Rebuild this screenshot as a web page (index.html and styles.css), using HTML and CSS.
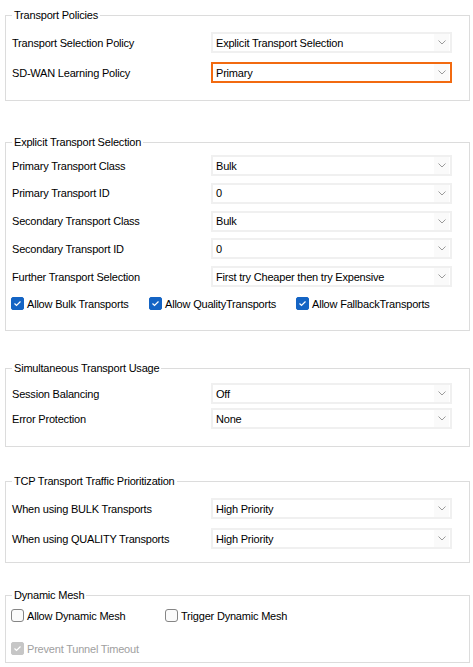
FILE: index.html
```html
<!DOCTYPE html>
<html>
<head>
<meta charset="utf-8">
<link rel="stylesheet" href="styles.css">
</head>
<body>
<fieldset class="group g1">
  <legend>Transport Policies</legend>
  <div class="rows r1">
    <span class="lbl">Transport Selection Policy</span>
    <div class="combo"><span>Explicit Transport Selection</span><i class="arrow"><svg width="8" height="5" viewBox="0 0 8 5"><polyline points="0.5,0.5 4,4 7.5,0.5"/></svg></i></div>
    <span class="lbl">SD-WAN Learning Policy</span>
    <div class="combo focus"><span>Primary</span><i class="arrow"><svg width="8" height="5" viewBox="0 0 8 5"><polyline points="0.5,0.5 4,4 7.5,0.5"/></svg></i></div>
  </div>
</fieldset>

<fieldset class="group g2">
  <legend>Explicit Transport Selection</legend>
  <div class="rows r2">
    <span class="lbl">Primary Transport Class</span>
    <div class="combo"><span>Bulk</span><i class="arrow"><svg width="8" height="5" viewBox="0 0 8 5"><polyline points="0.5,0.5 4,4 7.5,0.5"/></svg></i></div>
    <span class="lbl">Primary Transport ID</span>
    <div class="combo"><span>0</span><i class="arrow"><svg width="8" height="5" viewBox="0 0 8 5"><polyline points="0.5,0.5 4,4 7.5,0.5"/></svg></i></div>
    <span class="lbl">Secondary Transport Class</span>
    <div class="combo"><span>Bulk</span><i class="arrow"><svg width="8" height="5" viewBox="0 0 8 5"><polyline points="0.5,0.5 4,4 7.5,0.5"/></svg></i></div>
    <span class="lbl">Secondary Transport ID</span>
    <div class="combo"><span>0</span><i class="arrow"><svg width="8" height="5" viewBox="0 0 8 5"><polyline points="0.5,0.5 4,4 7.5,0.5"/></svg></i></div>
    <span class="lbl">Further Transport Selection</span>
    <div class="combo"><span>First try Cheaper then try Expensive</span><i class="arrow"><svg width="8" height="5" viewBox="0 0 8 5"><polyline points="0.5,0.5 4,4 7.5,0.5"/></svg></i></div>
  </div>
  <div class="checks c2">
    <label class="chk"><i class="box on"><svg width="13" height="13" viewBox="0 0 13 13"><polyline points="3.5,6.5 5.5,8.5 9.5,4.5"/></svg></i>Allow Bulk Transports</label>
    <label class="chk"><i class="box on"><svg width="13" height="13" viewBox="0 0 13 13"><polyline points="3.5,6.5 5.5,8.5 9.5,4.5"/></svg></i>Allow QualityTransports</label>
    <label class="chk"><i class="box on"><svg width="13" height="13" viewBox="0 0 13 13"><polyline points="3.5,6.5 5.5,8.5 9.5,4.5"/></svg></i>Allow FallbackTransports</label>
  </div>
</fieldset>

<fieldset class="group g3">
  <legend>Simultaneous Transport Usage</legend>
  <div class="rows r3">
    <span class="lbl">Session Balancing</span>
    <div class="combo"><span>Off</span><i class="arrow"><svg width="8" height="5" viewBox="0 0 8 5"><polyline points="0.5,0.5 4,4 7.5,0.5"/></svg></i></div>
    <span class="lbl">Error Protection</span>
    <div class="combo"><span>None</span><i class="arrow"><svg width="8" height="5" viewBox="0 0 8 5"><polyline points="0.5,0.5 4,4 7.5,0.5"/></svg></i></div>
  </div>
</fieldset>

<fieldset class="group g4">
  <legend>TCP Transport Traffic Prioritization</legend>
  <div class="rows r4">
    <span class="lbl">When using BULK Transports</span>
    <div class="combo"><span>High Priority</span><i class="arrow"><svg width="8" height="5" viewBox="0 0 8 5"><polyline points="0.5,0.5 4,4 7.5,0.5"/></svg></i></div>
    <span class="lbl">When using QUALITY Transports</span>
    <div class="combo"><span>High Priority</span><i class="arrow"><svg width="8" height="5" viewBox="0 0 8 5"><polyline points="0.5,0.5 4,4 7.5,0.5"/></svg></i></div>
  </div>
</fieldset>

<fieldset class="group g5">
  <legend>Dynamic Mesh</legend>
  <div class="checks c5">
    <label class="chk"><i class="box"></i>Allow Dynamic Mesh</label>
    <label class="chk"><i class="box"></i>Trigger Dynamic Mesh</label>
  </div>
  <div class="checks c5b">
    <label class="chk disabled"><i class="box dis"><svg width="13" height="13" viewBox="0 0 13 13"><polyline points="3.5,6.5 5.5,8.5 9.5,4.5"/></svg></i>Prevent Tunnel Timeout</label>
  </div>
</fieldset>
</body>
</html>
```

FILE: styles.css
```css
html, body {
  margin: 0;
  padding: 0;
  background: #ffffff;
}

body {
  font-family: "Liberation Sans", Arial, sans-serif;
  font-size: 11px;
  letter-spacing: -0.2px;
  color: #000;
  width: 473px;
  height: 667px;
  overflow: hidden;
}

.group {
  box-sizing: border-box;
  width: 465px;
  margin: 0 0 0 5px;
  border: 1px solid #dcdcdc;
  padding: 0 17px 0 6px;
  min-width: 0;
}

.group legend {
  padding: 0 2px;
  line-height: 15px;
  height: 15px;
}

.g1 { margin-top: 8px; padding-top: 9px; padding-bottom: 17px; }
.g2 { margin-top: 34px; padding-top: 5px; padding-bottom: 19px; }
.g3 { margin-top: 30px; padding-top: 7px; padding-bottom: 17px; }
.g4 { margin-top: 27px; padding-top: 9px; padding-bottom: 13px; }
.g5 { margin-top: 25px; padding-top: 5px; padding-bottom: 6px; }

.rows {
  display: grid;
  grid-template-columns: 199px 241px;
  grid-auto-rows: 21px;
  align-items: center;
}

.r1 { row-gap: 9px; }
.r2 { row-gap: 6.75px; }
.r3 { row-gap: 4px; }
.r4 { row-gap: 9px; }

.lbl {
  white-space: nowrap;
}

.combo {
  box-sizing: border-box;
  height: 21px;
  border: 2px solid #f0f0f0;
  background: #fff;
  display: flex;
  align-items: center;
  padding-left: 3px;
}

.combo.focus {
  border-color: #f26a10;
}

.combo span {
  flex: 1;
  white-space: nowrap;
}

.arrow {
  width: 15px;
  align-self: stretch;
  background: #fafafa;
  display: flex;
  align-items: center;
  justify-content: center;
  margin-right: 1px;
}

.arrow svg {
  display: block;
}

.arrow polyline {
  fill: none;
  stroke: #9a9a9a;
  stroke-width: 1;
}

.checks {
  display: grid;
  height: 15px;
  align-items: center;
  margin-left: -1px;
}

.c2 {
  margin-top: 9px;
  grid-template-columns: 138px 147px auto;
}

.c5 {
  grid-template-columns: 154px auto;
}

.c5b {
  margin-top: 18px;
}

.chk {
  display: flex;
  align-items: center;
  gap: 3px;
  white-space: nowrap;
}

.chk.disabled {
  color: #a0a0a0;
}

.box {
  box-sizing: border-box;
  width: 13px;
  height: 13px;
  border: 1px solid #858585;
  border-radius: 3px;
  background: #fbfbfb;
  display: block;
}

.box svg {
  display: block;
  margin: -1px;
}

.box polyline {
  fill: none;
  stroke: #fff;
  stroke-width: 1.2;
}

.box.on {
  border-color: #1464c4;
  background: #1464c4;
  border-radius: 2px;
}

.box.dis {
  border-color: #c6c6c6;
  background: #c6c6c6;
  border-radius: 2px;
}
```
